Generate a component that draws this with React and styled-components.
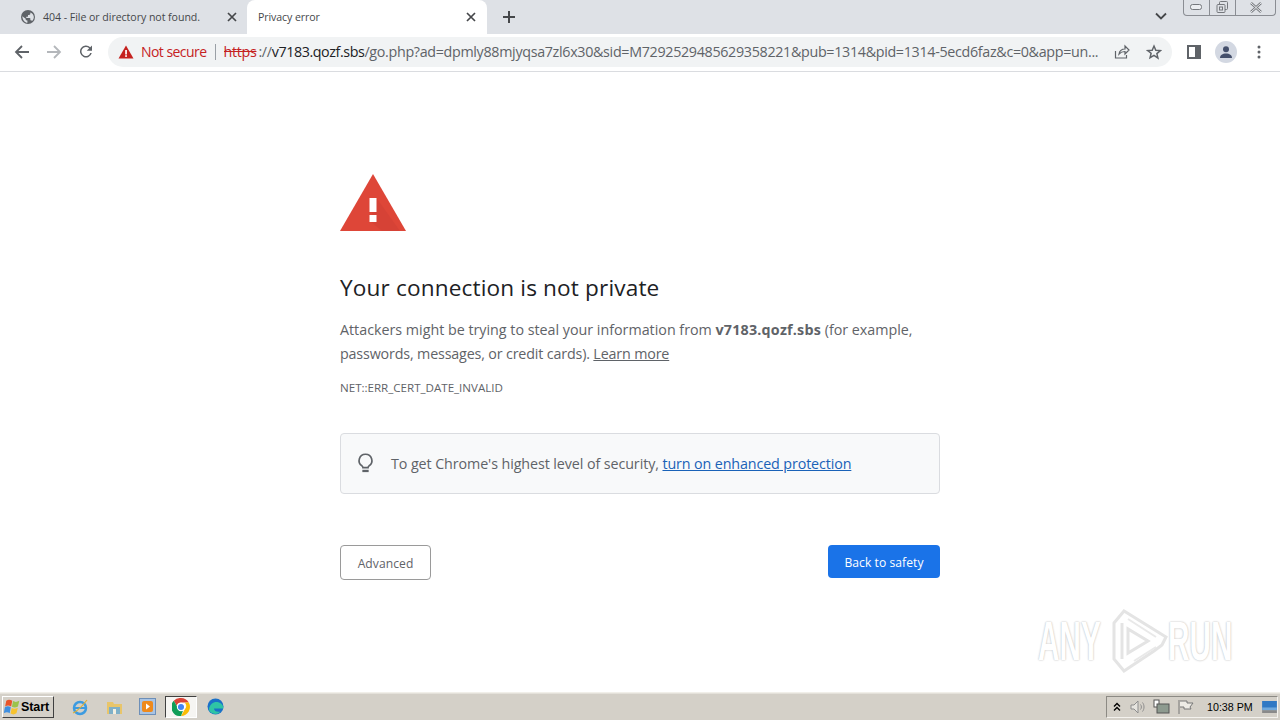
import React from 'react';
import styled, {createGlobalStyle} from 'styled-components';

const Global = createGlobalStyle`
  html, body {
    margin: 0;
    padding: 0;
    height: 100%;
    background: #fff;
    overflow: hidden;
  }
  #root {
    height: 100%;
  }
`;

const Screen = styled.div`
  position: relative;
  display: flex;
  flex-direction: column;
  width: 1280px;
  height: 720px;
  font-family: "Open Sans", "Noto Sans", sans-serif;
  overflow: hidden;
`;

/* tab strip */
const TabStrip = styled.div`
  display: flex;
  flex: 0 0 34px;
  background: #dee1e6;
  padding-left: 8px;
`;

const Tab = styled.div`
  display: flex;
  align-items: center;
  box-sizing: border-box;
  width: ${p => p.$width}px;
  height: 34px;
  padding: ${p => p.$active ? '0 11px 0 11px' : '0 10px 0 13px'};
  background: ${p => p.$active ? '#fff' : 'transparent'};
  border-radius: ${p => p.$active ? '8px 8px 0 0' : '0'};
  color: #45474a;
  font-size: 10.6px;
  letter-spacing: ${p => p.$active ? '-0.1px' : '-0.05px'};
`;

const TabTitle = styled.span`
  flex: 1;
  margin-left: ${p => p.$indent}px;
  white-space: nowrap;
`;

const NewTab = styled.div`
  display: flex;
  align-items: center;
  margin-left: 15px;
`;

const StripEnd = styled.div`
  display: flex;
  flex: 1;
  justify-content: flex-end;
  align-items: flex-start;
`;

const TabMenu = styled.div`
  margin: 12px 16px 0 0;
  line-height: 0;
`;

const WindowButtons = styled.div`
  display: flex;
  box-sizing: border-box;
  width: 93px;
  height: 16px;
  margin-right: 4px;
  border: 1px solid #8a8d93;
  border-top: none;
  border-radius: 0 0 4px 4px;
`;

const WindowButton = styled.div`
  display: flex;
  align-items: center;
  justify-content: center;
  flex: ${p => p.$wide ? '1' : '0 0 25px'};
  border-left: ${p => p.$first ? 'none' : '1px solid #8a8d93'};
`;

/* toolbar */
const Toolbar = styled.div`
  display: flex;
  align-items: center;
  box-sizing: border-box;
  flex: 0 0 38px;
  background: #fff;
  border-bottom: 1px solid #dadce0;
  padding: 0 0 2px 13px;
`;

const NavButton = styled.div`
  display: flex;
  width: 18px;
  justify-content: center;
  margin-right: ${p => p.$gap}px;
`;

const Omnibox = styled.div`
  display: flex;
  align-items: center;
  box-sizing: border-box;
  width: 1064px;
  height: 30px;
  padding: 0 10px 0 10px;
  border-radius: 15px;
  background: #f1f3f4;
  font-size: 14.3px;
  white-space: nowrap;
`;

const NotSecure = styled.span`
  margin-left: 7px;
  color: #c5221f;
  font-size: 14px;
  letter-spacing: -0.55px;
`;

const Divider = styled.span`
  width: 1px;
  height: 16px;
  margin: 0 8px;
  background: #9aa0a6;
`;

const Url = styled.div`
  flex: 1;
  color: #5f6368;
  letter-spacing: -0.32px;
  overflow: hidden;
`;

const Scheme = styled.span`
  margin-right: 2px;
  color: #c5221f;
  text-decoration: line-through;
`;

const Host = styled.span`
  color: #202124;
  letter-spacing: -0.42px;
`;

const OmniIcon = styled.div`
  display: flex;
  margin-left: ${p => p.$gap}px;
`;

const ToolIcons = styled.div`
  display: flex;
  align-items: center;
  margin-left: 15px;
`;

const Avatar = styled.div`
  display: flex;
  align-items: center;
  justify-content: center;
  width: 22px;
  height: 22px;
  margin: 0 0 0 14px;
  border-radius: 50%;
  background: #d3d8e2;
`;

const MenuDots = styled.div`
  display: flex;
  margin-left: 20px;
`;

/* page */
const Page = styled.main`
  flex: 1;
  padding: 102px 340px 0;
  background: #fff;
`;

const WarningIcon = styled.div`
  height: 58px;
  line-height: 0;
`;

const Heading = styled.h1`
  margin: 39px 0 0;
  color: #202124;
  font-size: 22.6px;
  font-weight: 400;
  line-height: 33px;
  letter-spacing: 0.15px;
`;

const Message = styled.p`
  margin: 14px 0 0;
  color: #5f6368;
  font-size: 14.3px;
  line-height: 24px;
  letter-spacing: -0.16px;

  &::first-line {
    letter-spacing: -0.01px;
  }
`;

const Strong = styled.strong`
  font-weight: 700;
  letter-spacing: 0.2px;
`;

const LearnMore = styled.span`
  color: #5f6368;
  text-decoration: underline;
`;

const ErrorCode = styled.div`
  margin-top: 14px;
  color: #5f6368;
  font-size: 11.6px;
  line-height: 16px;
  letter-spacing: -0.02px;
`;

const Callout = styled.div`
  display: flex;
  align-items: center;
  box-sizing: border-box;
  height: 61px;
  margin-top: 37px;
  padding: 0 0 0 16px;
  background: #f8f9fa;
  border: 1px solid #dadce0;
  border-radius: 4px;
  color: #5f6368;
  font-size: 14.3px;
  letter-spacing: -0.09px;
`;

const CalloutText = styled.span`
  margin-left: 17px;
`;

const CalloutLink = styled.span`
  color: #1a62b8;
  text-decoration: underline;
  letter-spacing: -0.12px;
`;

const Actions = styled.div`
  display: flex;
  justify-content: space-between;
  align-items: flex-start;
  margin-top: 51px;
`;

const Button = styled.div`
  display: flex;
  align-items: center;
  justify-content: center;
  box-sizing: border-box;
  border-radius: 4px;
  font-size: 12.1px;
  letter-spacing: 0.06px;
  ${p => p.$primary
    ? 'width: 112px; height: 33px; background: #1a73e8; color: #fff; padding-top: 2px;'
    : 'width: 91px; height: 35px; background: #fff; color: #5f6368; border: 1px solid #9a9a9a; padding-top: 2px;'}
`;

/* watermark sits over the page */
const Watermark = styled.div`
  position: absolute;
  left: 1038px;
  top: 608px;
  display: flex;
  align-items: center;
  height: 66px;
  color: #fff;
  font-family: "Liberation Sans", sans-serif;
  font-size: 55px;
  font-weight: 700;
  line-height: 1;
  text-shadow: 0 0 2px #bdbdbd, 0 0 3px #dcdcdc;
`;

const WatermarkWord = styled.span`
  display: inline-block;
  width: ${p => p.$width}px;
  white-space: nowrap;
  transform: scaleX(${p => p.$scale});
  transform-origin: left center;
`;

const WatermarkLogo = styled.svg`
  margin: 0 0 0 6px;
`;

/* taskbar */
const Taskbar = styled.footer`
  display: flex;
  align-items: center;
  box-sizing: border-box;
  flex: 0 0 28px;
  background: #d4d0c8;
  border-top: 1px solid #f1efe9;
  box-shadow: inset 0 1px 0 #e4e1da;
  padding-left: 2px;
  font-family: "Liberation Sans", sans-serif;
`;

const Start = styled.div`
  display: flex;
  align-items: center;
  box-sizing: border-box;
  width: 52px;
  height: 22px;
  padding-left: 1px;
  background: #d4d0c8;
  border: 1px solid;
  border-color: #fff #404040 #404040 #fff;
  color: #000;
  font-size: 12.5px;
  font-weight: 700;
`;

const StartLabel = styled.span`
  letter-spacing: -0.1px;
`;

const QuickLaunch = styled.div`
  display: flex;
  align-items: center;
  margin-left: 17px;
`;

const Launcher = styled.div`
  display: flex;
  align-items: center;
  justify-content: center;
  box-sizing: border-box;
  width: ${p => p.$active ? 32 : 18}px;
  height: ${p => p.$active ? 22 : 18}px;
  margin-right: ${p => p.$gap}px;
  ${p => p.$active && `
    background: #f6f5f2;
    border: 1px solid;
    border-color: #404040 #fff #fff #404040;
  `}
`;

const Tray = styled.div`
  display: flex;
  align-items: center;
  box-sizing: border-box;
  height: 22px;
  margin-left: auto;
  margin-right: 2px;
  padding-left: 6px;
  border: 1px solid;
  border-color: #8c8a84 #f4f2ee #f4f2ee #8c8a84;
  width: 172px;
`;

const TrayIcon = styled.svg`
  margin-left: ${p => p.$gap}px;
`;

const Clock = styled.span`
  margin-left: 13px;
  color: #000;
  font-size: 10.7px;
  white-space: nowrap;
`;

const Globe = () => (
  <svg width="14" height="14" viewBox="0 0 24 24">
    <circle cx="12" cy="12" r="12" fill="#5f6368" />
    <path d="M11 21.9C7 21.4 2.5 17 2.2 10.5L8 15v1c0 1.1.9 2 2 2h1v3.9zM18.9 19c-.3-.8-1-1.4-1.9-1.4h-1v-3c0-.6-.4-1-1-1H9v-2h2c.6 0 1-.4 1-1v-2h2c1.1 0 2-.9 2-2V4.1C19.5 5.500 22 8.500 22 12c0 2.800-1.200 5.300-3.100 7z" fill="#dee1e6" />
  </svg>
);

const Close = ({color = '#45474a'}) => (
  <svg width="10" height="10" viewBox="0 0 10 10">
    <path d="M1 1l8 8M9 1l-8 8" stroke={color} strokeWidth="1.700" />
  </svg>
);

const Triangle = ({size, color, mark = '#fff'}) => (
  <svg width={size} height={size} viewBox="0 0 16 16">
    <path d="M8 1.500L15.500 14.500H.5z" fill={color} />
    <rect x="7.200" y="6" width="1.700" height="4.500" fill={mark} />
    <rect x="7.200" y="11.200" width="1.700" height="1.700" fill={mark} />
  </svg>
);

const StartFlag = () => (
  <svg width="17" height="16" viewBox="1 1 15 14">
    <path d="M3 2.500c2-1.500 3.500-1 5.300 0L7.300 7.500C5.500 6.500 4 6.200 2 7.500z" fill="#e8542a" />
    <path d="M9 2.800c1.700 1 3.200 1 5.500-.3l-1.200 5c-2 1.200-3.600 1.200-5.300.2z" fill="#9bc34a" />
    <path d="M1.800 8.300c2-1.300 3.500-1 5.200 0L6 13.500c-1.500-1-3-1.200-5.200 0z" fill="#3f8fe0" />
    <path d="M7.800 8.800c1.700 1 3.300 1 5.400-.2L12 13.600c-1.900 1.200-3.500 1.200-5.200.2z" fill="#f7c32e" />
  </svg>
);

const ChromeLogo = () => (
  <svg width="18" height="18" viewBox="4 4 40 40">
    <path d="M24 4a20 20 0 0 1 17.300 10H24a10 10 0 0 0-9.500 7L8 10.300A20 20 0 0 1 24 4z" fill="#db4437" />
    <path d="M41.300 14A20 20 0 0 1 24 44l8.600-15A10 10 0 0 0 32 14z" fill="#fbbc05" />
    <path d="M24 44A20 20 0 0 1 8 10.300L16.600 25a10 10 0 0 0 12 6.500L24 44z" fill="#0f9d58" />
    <circle cx="24" cy="24" r="8" fill="#4285f4" stroke="#fff" strokeWidth="2.500" />
  </svg>
);

export default function App() {
  return (
    <Screen>
      <Global />
      <TabStrip>
        <Tab $width={239}>
          <Globe />
          <TabTitle $indent={8}>404 - File or directory not found.</TabTitle>
          <Close />
        </Tab>
        <Tab $active $width={240}>
          <TabTitle $indent={0}>Privacy error</TabTitle>
          <Close />
        </Tab>
        <NewTab>
          <svg width="14" height="14" viewBox="0 0 14 14">
            <path d="M7 1v12M1 7h12" stroke="#45474a" strokeWidth="2" />
          </svg>
        </NewTab>
        <StripEnd>
          <TabMenu>
            <svg width="12" height="8" viewBox="0 0 12 8">
              <path d="M1 1.500l5 5 5-5" fill="none" stroke="#45474a" strokeWidth="1.800" />
            </svg>
          </TabMenu>
          <WindowButtons>
            <WindowButton $first>
              <svg width="13" height="7" viewBox="0 0 13 7">
                <rect x=".5" y=".5" width="11" height="5" rx="2" fill="#eceef1" stroke="#75787d" />
              </svg>
            </WindowButton>
            <WindowButton>
              <svg width="13" height="13" viewBox="0 0 13 13">
                <rect x="3.500" y=".5" width="8" height="8" rx="1" fill="none" stroke="#75787d" />
                <rect x="1" y="3.500" width="8" height="8" rx="1" fill="#dee1e6" stroke="#75787d" />
                <rect x="3.500" y="6" width="3" height="3" fill="none" stroke="#75787d" />
              </svg>
            </WindowButton>
            <WindowButton $wide>
              <svg width="14" height="11" viewBox="0 0 14 11">
                <path d="M2 1l10 9M12 1L2 10" stroke="#75787d" strokeWidth="2.400" />
                <path d="M2 1l10 9M12 1L2 10" stroke="#eceef1" strokeWidth="1" />
              </svg>
            </WindowButton>
          </WindowButtons>
        </StripEnd>
      </TabStrip>

      <Toolbar>
        <NavButton $gap={14}>
          <svg width="16" height="16" viewBox="0 0 16 16">
            <path d="M15 8H2.500M8 2L2 8l6 6" fill="none" stroke="#5f6368" strokeWidth="1.800" />
          </svg>
        </NavButton>
        <NavButton $gap={14}>
          <svg width="16" height="16" viewBox="0 0 16 16">
            <path d="M1 8h12.500M8 2l6 6-6 6" fill="none" stroke="#b4b7bb" strokeWidth="1.800" />
          </svg>
        </NavButton>
        <NavButton $gap={13}>
          <svg width="21" height="21" viewBox="0 0 24 24">
            <path d="M17.650 6.350A8 8 0 1 0 19.730 14h-2.080a6 6 0 1 1-1.410-6.240L13 11h7V4z" fill="#5f6368" />
          </svg>
        </NavButton>
        <Omnibox>
          <Triangle size={16} color="#c5221f" />
          <NotSecure>Not secure</NotSecure>
          <Divider />
          <Url>
            <Scheme>https</Scheme>://<Host>v7183.qozf.sbs</Host>/go.php?ad=dpmly88mjyqsa7zl6x30&amp;sid=M7292529485629358221&amp;pub=1314&amp;pid=1314-5ecd6faz&amp;c=0&amp;app=un...
          </Url>
          <OmniIcon $gap={14}>
            <svg width="16" height="16" viewBox="0 0 16 16">
              <path d="M1.500 7v7h11v-3M5 10c.500-3 3-5 6-5V2l4 4-4 4V7.500c-2.500 0-4.500.800-6 2.500z" fill="none" stroke="#5f6368" strokeWidth="1.200" />
            </svg>
          </OmniIcon>
          <OmniIcon $gap={16}>
            <svg width="16" height="16" viewBox="0 0 24 24">
              <path d="M12 3l2.700 6.300 6.800.6-5.200 4.500 1.600 6.700L12 17l-5.900 3.600 1.600-6.700L2.500 9.900l6.800-.6z" fill="none" stroke="#5f6368" strokeWidth="2.200" />
            </svg>
          </OmniIcon>
        </Omnibox>
        <ToolIcons>
          <svg width="14" height="14" viewBox="0 0 14 14">
            <rect x="1" y="1" width="12" height="12" fill="none" stroke="#5f6368" strokeWidth="2" />
            <rect x="8" y="1" width="5" height="12" fill="#5f6368" />
          </svg>
          <Avatar>
            <svg width="14" height="14" viewBox="0 0 14 14">
              <circle cx="7" cy="4.300" r="3" fill="#444f6b" />
              <path d="M1 13c0-3 2.500-4.500 6-4.500s6 1.500 6 4.500z" fill="#444f6b" />
            </svg>
          </Avatar>
          <MenuDots>
            <svg width="4" height="14" viewBox="0 0 4 14">
              <circle cx="2" cy="2" r="1.500" fill="#5f6368" />
              <circle cx="2" cy="7" r="1.500" fill="#5f6368" />
              <circle cx="2" cy="12" r="1.500" fill="#5f6368" />
            </svg>
          </MenuDots>
        </ToolIcons>
      </Toolbar>

      <Page>
        <WarningIcon>
          <svg width="66" height="58" viewBox="0 0 66 58">
            <path d="M33 0L66 57H0z" fill="#de4638" />
            <path d="M36.500 24L60 57H42L30 47z" fill="#d64236" />
            <rect x="29.500" y="24" width="7" height="14" fill="#fff" />
            <rect x="29.500" y="41" width="7" height="7" fill="#fff" />
          </svg>
        </WarningIcon>
        <Heading>Your connection is not private</Heading>
        <Message>
          Attackers might be trying to steal your information from <Strong>v7183.qozf.sbs</Strong> (for example, passwords, messages, or credit cards). <LearnMore>Learn more</LearnMore>
        </Message>
        <ErrorCode>NET::ERR_CERT_DATE_INVALID</ErrorCode>
        <Callout>
          <svg width="17" height="21" viewBox="0 0 16 20">
            <path d="M8 1.200a6 6 0 0 0-3.400 11c.6.5 1 1.100 1 1.800h4.800c0-.7.400-1.300 1-1.800A6 6 0 0 0 8 1.200z" fill="none" stroke="#5f6368" strokeWidth="1.600" />
            <rect x="5" y="16" width="6" height="2.200" fill="#5f6368" />
          </svg>
          <CalloutText>
            To get Chrome's highest level of security, <CalloutLink>turn on enhanced protection</CalloutLink>
          </CalloutText>
        </Callout>
        <Actions>
          <Button>Advanced</Button>
          <Button $primary>Back to safety</Button>
        </Actions>
      </Page>

      <Watermark>
        <WatermarkWord $width={66} $scale={0.54}>ANY</WatermarkWord>
        <WatermarkLogo width="58" height="64" viewBox="0 0 58 64">
          <path d="M4 14L14 2l42 26-4 8-8 6-30 20L4 50z" fill="none" stroke="#e4e4e4" strokeWidth="3" />
          <path d="M12 14v36" fill="none" stroke="#e4e4e4" strokeWidth="3" />
          <path d="M18 20v24l20-12z" fill="none" stroke="#e4e4e4" strokeWidth="3" />
          <path d="M18 10l28 18M24 52l22-14" fill="none" stroke="#e9e9e9" strokeWidth="2" />
        </WatermarkLogo>
        <WatermarkWord $width={64} $scale={0.54}>RUN</WatermarkWord>
      </Watermark>

      <Taskbar>
        <Start>
          <StartFlag />
          <StartLabel>Start</StartLabel>
        </Start>
        <QuickLaunch>
          <Launcher $gap={16}>
            <svg width="18" height="18" viewBox="0 0 18 18">
              <circle cx="9" cy="10" r="6" fill="none" stroke="#3d9be0" strokeWidth="2.500" />
              <path d="M4 10h10" stroke="#3d9be0" strokeWidth="2" />
              <path d="M2 15c3-1 10-8 14-13" fill="none" stroke="#e0b030" strokeWidth="1.200" />
            </svg>
          </Launcher>
          <Launcher $gap={15}>
            <svg width="17" height="16" viewBox="0 0 17 16">
              <path d="M1 3h6l1 2h8v10H1z" fill="#e8c56a" />
              <rect x="3" y="8" width="11" height="7" fill="#7fb0c8" />
              <rect x="7" y="10" width="3" height="5" fill="#f3efe0" />
            </svg>
          </Launcher>
          <Launcher $gap={9}>
            <svg width="17" height="17" viewBox="0 0 17 17">
              <rect x=".5" y=".5" width="16" height="16" fill="#a9c4e4" stroke="#6d8fb8" />
              <rect x="3" y="3" width="11" height="11" rx="2" fill="#ee8a1d" />
              <path d="M7 5.500l4 3-4 3z" fill="#fff" />
            </svg>
          </Launcher>
          <Launcher $active $gap={9}>
            <ChromeLogo />
          </Launcher>
          <Launcher $gap={0}>
            <svg width="17" height="17" viewBox="0 0 17 17">
              <circle cx="8.500" cy="8.500" r="8" fill="#1a70c8" />
              <path d="M2 11C3 5 8 3 12 4.500c3 1.200 4.500 3.500 4.500 6H7c0 2.500 3 4 6.500 3-2 2.500-5 3-7.500 2-2.500-1-4-2.500-4-4.500z" fill="#2fc4a5" />
            </svg>
          </Launcher>
        </QuickLaunch>
        <Tray>
          <svg width="8" height="10" viewBox="0 0 8 10">
            <path d="M1 4.500L4 1.500l3 3M1 8.500l3-3 3 3" fill="none" stroke="#000" strokeWidth="1.400" />
          </svg>
          <TrayIcon $gap={9} width="16" height="16" viewBox="0 0 16 16">
            <path d="M1 6h3l4-4v12l-4-4H1z" fill="#e6e4df" stroke="#8d8d8d" />
            <path d="M10.500 5.500c1.200 1.500 1.200 3.500 0 5M12.500 3.500c2 2.500 2 6.500 0 9" fill="none" stroke="#8d8d8d" />
          </TrayIcon>
          <TrayIcon $gap={7} width="17" height="16" viewBox="0 0 17 16">
            <rect x="1" y="1" width="5" height="7" fill="#fff" stroke="#555" />
            <rect x="4" y="5" width="12" height="9" fill="#8d9a8f" stroke="#555" />
          </TrayIcon>
          <TrayIcon $gap={7} width="17" height="16" viewBox="0 0 17 16">
            <path d="M2 1v14M3 2h7v2h6l-3 4 1 2H7V8H3" fill="#eeece6" stroke="#777" />
          </TrayIcon>
          <Clock>10:38 PM</Clock>
          <TrayIcon $gap={9} width="15" height="12" viewBox="0 0 16 13">
            <rect width="16" height="10" fill="#2f78c4" />
            <rect y="7" width="16" height="3" fill="#6fa8dc" />
            <rect y="10" width="16" height="3" fill="#8a8a8a" />
          </TrayIcon>
        </Tray>
      </Taskbar>
    </Screen>
  );
}
